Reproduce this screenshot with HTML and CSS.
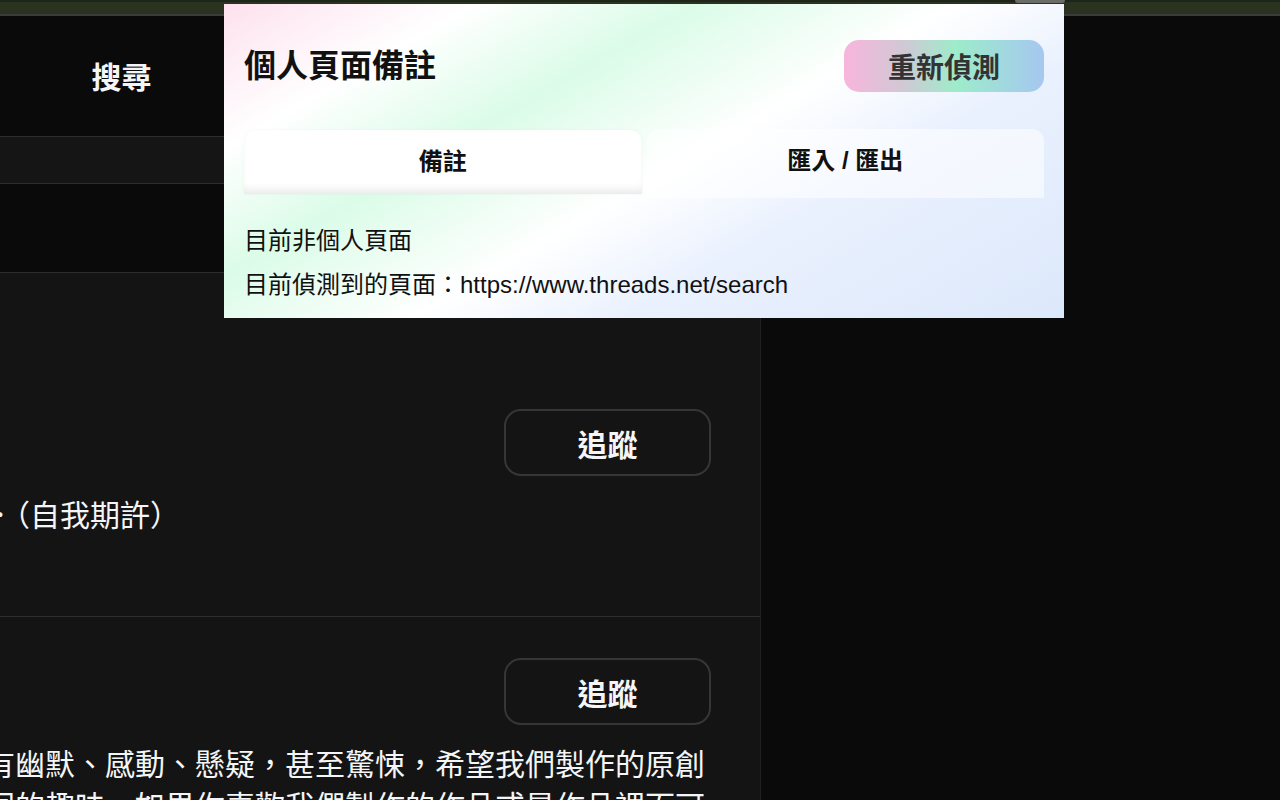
FILE: index.html
```html
<!DOCTYPE html>
<html lang="zh-Hant">
<head>
<meta charset="utf-8">
<title>搜尋 • Threads</title>
<link rel="stylesheet" href="styles.css">
</head>
<body>
<div class="topbar"><span class="topbar-pill"></span></div>
<div class="page">
  <main class="col">
    <header class="head"><div class="head-title">搜尋</div></header>
    <div class="bar bar-search"></div>
    <div class="bar bar-empty"></div>
    <section class="list">
      <article class="item item-first">
        <div class="item-top"><button class="follow">追蹤</button></div>
        <p class="bio bio-first">．（自我期許）</p>
      </article>
      <article class="item item-second">
        <div class="item-top"><button class="follow">追蹤</button></div>
        <p class="bio bio-second"><span class="line">有幽默、感動、懸疑，甚至驚悚，希望我們製作的原創</span><span class="line">同的趣味，如果你喜歡我們製作的作品或是作品裡面可</span></p>
      </article>
    </section>
  </main>
  <aside class="side"></aside>
</div>

<div class="popup">
  <div class="pop-head">
    <h1 class="pop-title">個人頁面備註</h1>
    <button class="redetect">重新偵測</button>
  </div>
  <div class="tabs">
    <div class="tab tab-active">備註</div>
    <div class="tab tab-other">匯入 / 匯出</div>
  </div>
  <div class="pop-body">
    <p class="pop-line">目前非個人頁面</p>
    <p class="pop-line">目前偵測到的頁面：https://www.threads.net/search</p>
  </div>
</div>
</body>
</html>
```

FILE: styles.css
```css
html, body {
  margin: 0;
  padding: 0;
  width: 1280px;
  height: 800px;
  overflow: hidden;
  background: #0a0a0a;
  font-family: "Noto Sans CJK TC", "Liberation Sans", sans-serif;
}

.topbar {
  height: 12px;
  border-top: 2px solid #1e2519;
  border-bottom: 2px solid #3a3a3a;
  background: #29331f;
  display: flex;
  justify-content: flex-end;
}

.topbar-pill {
  width: 50px;
  height: 3px;
  margin-top: -2px;
  margin-right: 215px;
  border-radius: 0 0 8px 8px;
  background: #6b6e66;
}

.page {
  display: flex;
  height: 784px;
  overflow: hidden;
}

.col {
  width: 760px;
  flex: none;
  display: flex;
  flex-direction: column;
  border-right: 1px solid #202020;
  color: #f3f5f7;
  overflow: hidden;
}

.col > * {
  flex: none;
}

.side {
  flex: 1;
  background: #0a0a0a;
}

.head {
  height: 120px;
  display: flex;
  align-items: center;
  background: #0a0a0a;
  border-bottom: 1px solid #2d2d2d;
}

.head-title {
  width: 243px;
  margin-top: -3px;
  text-align: center;
  font-size: 30px;
  font-weight: 700;
  line-height: 1;
}

.bar {
  border-bottom: 1px solid #2d2d2d;
}

.bar-search {
  height: 46px;
  background: #151515;
}

.bar-empty {
  height: 88px;
  background: #0a0a0a;
}

.col > .list {
  flex: 1 0 auto;
  background: #141414;
}

.item {
  border-bottom: 1px solid #2e2e2e;
}

.item-first {
  padding-top: 136px;
  padding-bottom: 82px;
}

.item-second {
  padding-top: 41px;
}

.item-top {
  display: flex;
  justify-content: flex-end;
  padding-right: 49px;
}

.follow {
  width: 207px;
  height: 67px;
  box-sizing: border-box;
  border: 2px solid #363636;
  border-radius: 17px;
  background: transparent;
  color: #f3f5f7;
  font-family: "Noto Sans CJK TC", sans-serif;
  font-size: 30px;
  font-weight: 700;
  padding: 0;
}

.bio {
  margin: 16px 0 0;
  font-family: "Noto Sans CJK JP", "Noto Sans CJK TC", sans-serif;
  font-size: 30px;
  line-height: 42px;
  white-space: nowrap;
}

.bio-first {
  margin-left: -15px;
}

.bio-second {
  margin-left: -15px;
}

.line {
  display: block;
}

/* popup */
.popup {
  position: absolute;
  left: 224px;
  top: 4px;
  width: 840px;
  height: 314px;
  box-sizing: border-box;
  padding: 36px 20px 0;
  background: linear-gradient(150deg, #fde1ee 0%, #ffffff 18%, #dbfce8 34%, #ffffff 53%, #eaf1fe 68%, #dce8fb 100%);
  font-family: "Liberation Sans", "Noto Sans CJK TC", sans-serif;
  color: #111;
}

.pop-head {
  display: flex;
  justify-content: space-between;
  align-items: center;
  height: 52px;
}

.pop-title {
  margin: 0;
  font-size: 32px;
  font-weight: 700;
  line-height: 1;
}

.redetect {
  width: 200px;
  height: 52px;
  border: 0;
  border-radius: 15px;
  padding: 0;
  background: linear-gradient(90deg, #f8b5dc 0%, #d0c9d5 30%, #9decca 56%, #a5c7f0 100%);
  color: #333;
  font-family: "Noto Sans CJK TC", sans-serif;
  font-size: 28px;
  font-weight: 700;
}

.tabs {
  display: flex;
  gap: 5px;
  margin-top: 37px;
  align-items: flex-start;
}

.tab {
  flex: 1;
  height: 64px;
  line-height: 64px;
  text-align: center;
  font-size: 24px;
  font-weight: 700;
  border-radius: 12px 12px 0 0;
}

.tab-active {
  margin-top: 1px;
  background: #ffffff;
  box-shadow: inset 0 -8px 8px -4px rgba(0, 0, 0, 0.09), 0 0 3px rgba(0, 0, 0, 0.05);
}

.tab-other {
  padding-bottom: 5px;
  background: rgba(255, 255, 255, 0.55);
}

.pop-body {
  margin-top: 21px;
}

.pop-line {
  margin: 0;
  font-size: 24px;
  line-height: 44px;
  white-space: nowrap;
}
```
